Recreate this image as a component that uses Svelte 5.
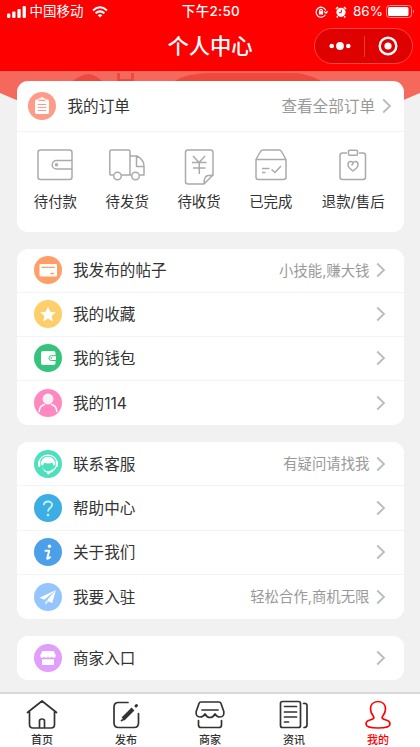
<script>
  const orders = [
    { icon: 'wallet', label: '待付款' },
    { icon: 'truck', label: '待发货' },
    { icon: 'receipt', label: '待收货' },
    { icon: 'box', label: '已完成' },
    { icon: 'refund', label: '退款/售后' },
  ];

  const groups = [
    [
      { icon: 'card', color: '#ff9f68', label: '我发布的帖子', note: '小技能,赚大钱' },
      { icon: 'star', color: '#fccf6b', label: '我的收藏' },
      { icon: 'purse', color: '#34c57c', label: '我的钱包' },
      { icon: 'user', color: '#ff88c0', label: '我的114' },
    ],
    [
      { icon: 'service', color: '#4ce0bd', label: '联系客服', note: '有疑问请找我' },
      { icon: 'help', color: '#3daee5', label: '帮助中心' },
      { icon: 'info', color: '#4c9fe9', label: '关于我们' },
      { icon: 'plane', color: '#94c5ff', label: '我要入驻', note: '轻松合作,商机无限' },
    ],
    [{ icon: 'shop', color: '#df9ffb', label: '商家入口' }],
  ];

  const tabs = [
    { icon: 'home', label: '首页' },
    { icon: 'edit', label: '发布' },
    { icon: 'store', label: '商家' },
    { icon: 'news', label: '资讯' },
    { icon: 'me', label: '我的' },
  ];

  let active = $state('me');
</script>

{#snippet chevron()}
  <svg class="chevron" width="10" height="16" viewBox="0 0 10 16">
    <path d="M1.2 1.5 8 8l-6.8 6.5" />
  </svg>
{/snippet}

<div class="page">
  <header>
    <div class="status">
      <div class="carrier">
        <svg width="20" height="12" viewBox="0 0 20 12" fill="#fff">
          <rect x="0" y="7.5" width="3.3" height="4.5" rx="1" />
          <rect x="5.2" y="5.5" width="3.3" height="6.5" rx="1" />
          <rect x="10.4" y="3" width="3.3" height="9" rx="1" />
          <rect x="15.6" y="0" width="3.3" height="12" rx="1" />
        </svg>
        <span>中国移动</span>
        <svg class="wifi" width="16" height="12" viewBox="0 0 16 12" fill="none" stroke="#fff" stroke-width="2">
          <path d="M1 4.4Q8-1.8 15 4.4M3.6 7.2q4.4-3.7 8.8 0" />
          <path d="M8 11.5 5.700 9.200q2.300-1.700 4.600 0z" fill="#fff" stroke="none" />
        </svg>
      </div>
      <div class="time">下午2:50</div>
      <div class="power">
        <svg width="13" height="12" viewBox="0 0 13 12" fill="none" stroke="#fff" stroke-width="1.2">
          <path d="M10.400 8.800A5 5 0 1 1 10.800 4.500M9 5.400l2 1.800 1.600-2" />
          <rect x="3.900" y="5.200" width="4.200" height="3.300" fill="#fff" stroke="none" />
          <path d="M4.700 5.500V4.300q1.300-1.800 2.600 0v1.200" />
        </svg>
        <svg class="alarm" width="12" height="12" viewBox="0 0 12 12">
          <circle cx="6" cy="6.300" r="4.600" fill="#fff" />
          <path d="M1 3 3 1M11 3 9 1M2.800 10.200l-1 1.300M9.200 10.200l1 1.300" stroke="#fff" stroke-width="1.5" />
          <path d="M6.300 3.700v3H4" fill="none" stroke="#f00" stroke-width="1" />
        </svg>
        <span>86%</span>
        <svg class="battery" width="29" height="13" viewBox="0 0 29 13">
          <rect x=".5" y=".5" width="25" height="12" rx="3" fill="none" stroke="#ff8f8f" />
          <rect x="2" y="2" width="20.500" height="9" rx="1.500" fill="#fff" />
          <path d="M27 4.500q2 2 0 4z" fill="#ff8f8f" />
        </svg>
      </div>
    </div>
    <div class="nav">
      <h1>个人中心</h1>
      <div class="capsule">
        <svg width="22" height="10" viewBox="0 0 22 10" fill="#fff">
          <circle cx="2.700" cy="5" r="2.300" />
          <circle cx="11" cy="5" r="3.900" />
          <circle cx="19.300" cy="5" r="2.300" />
        </svg>
        <i></i>
        <svg width="20" height="20" viewBox="0 0 20 20">
          <circle cx="10" cy="10" r="8.300" fill="none" stroke="#fff" stroke-width="2.400" />
          <circle cx="10" cy="10" r="3.600" fill="#fff" />
        </svg>
      </div>
    </div>
  </header>

  <main>
    <svg class="backdrop" width="420" height="60" viewBox="0 0 420 60">
      <path d="M0 0h420v22Q210 118 0 22z" fill="#f4695c" />
      <path d="M73 10q7-6 15-7 8 1 14 7zM117 2h3v6h11V2h3v8h-17zM175 10q10-7 32-8h90q14 2 24 8z" fill="#ef493e" />
    </svg>

    <section class="card orders">
      <div class="orders-head">
        <svg width="28" height="28" viewBox="0 0 28 28">
          <circle cx="14" cy="14" r="14" fill="#ff9b88" />
          <path d="M8.500 7.500h2.200V6.200h1.600q1.700-2.400 3.400 0h1.600v1.300h2.200q1.500 0 1.500 1.500v11.500q0 1.500-1.500 1.500h-11Q7 22 7 20.500V9q0-1.500 1.500-1.500z" fill="#fff" />
          <path d="M10.700 8.400h6.600M9.700 12.500h8.600M9.700 15.500h8.600M9.700 18.500h8.600" stroke="#ff9b88" stroke-width="1.2" />
        </svg>
        <span class="label">我的订单</span>
        <span class="more">查看全部订单</span>
        {@render chevron()}
      </div>
      <div class="order-list">
        {#each orders as item}
          <div class="order">
            <svg width="40" height="40" viewBox="0 0 40 40">
              {#if item.icon === 'wallet'}
                <rect x="3" y="5" width="34" height="29.500" rx="2.500" />
                <path d="M37 15.500H21.500a4.300 4.300 0 0 0 0 8.600H37" />
                <circle cx="21.500" cy="19.800" r="1" />
              {:else if item.icon === 'truck'}
                <path d="M6 30H4.300Q2.800 30 2.800 28.500V6.500Q2.800 5 4.300 5h17Q23 5 23 6.500V30h-8.300M23 11h7q7 3.500 7 10.500V30h-4.300M24.500 30H23M29.500 11.500v10h7" />
                <circle cx="10.500" cy="31" r="3.800" />
                <circle cx="28.500" cy="31" r="3.800" />
              {:else if item.icon === 'receipt'}
                <path d="M34 30V7.500Q34 5 31.500 5H9Q6.500 5 6.500 7.500v29Q6.500 39 9 39h16zM25 39q0-9 5-8.500Q34 31 34 28" />
                <path d="m14 11 6 6.500 6-6.500M13 17.500h14.500M14 23h12.500M20.300 17.500V29" />
              {:else if item.icon === 'box'}
                <path d="m5 14.500 4.500-8Q10.500 5 12 5h16q1.500 0 2.500 1.500l4.500 8V32q0 2.500-2.500 2.500h-25Q5 34.500 5 32zM5 14.500h30" />
                <path d="M11 23.500h7.500M11 27.500h3.500M20.500 24.500l3.500 3 6-6.500" />
              {:else}
                <path d="M14 8h-4.500Q7 8 7 10.500V32q0 2.500 2.500 2.500h20.500q2.500 0 2.500-2.500V10.500Q32.500 8 30 8h-4" />
                <rect x="15.500" y="5.300" width="9" height="5" rx="1" />
                <path d="M20 26q-5-3.500-5-6.300c0-4 4-4 5-1.400 1-2.600 5-2.600 5 1.400Q25 22.500 20 26zM20 18.500l-1.500 2" />
              {/if}
            </svg>
            <span>{item.label}</span>
          </div>
        {/each}
      </div>
    </section>

    {#each groups as rows}
      <section class="card">
        {#each rows as row}
          <div class="row">
            <svg width="28" height="28" viewBox="0 0 28 28">
              <circle cx="14" cy="14" r="14" fill={row.color} />
              {#if row.icon === 'card'}
                <rect x="5.500" y="8" width="17.500" height="12.500" rx="1" fill="#fff" />
                <path d="M7.500 11.300h13.500M16.500 17.500h3.500" stroke={row.color} stroke-width="1.3" />
              {:else if row.icon === 'star'}
                <path d="m14 6.500 2.200 5.200 5.600.5-4.200 3.700 1.200 5.600-4.800-3-4.800 3 1.200-5.600-4.200-3.700 5.600-.5z" fill="#fff" />
              {:else if row.icon === 'purse'}
                <rect x="7" y="7" width="14.500" height="14" rx="2" fill="#fff" />
                <path d="M22 11.700h-4.700a2.400 2.400 0 0 0 0 4.800H22" fill="#fff" stroke={row.color} />
                <circle cx="17.300" cy="14.100" r=".8" fill={row.color} />
              {:else if row.icon === 'user'}
                <circle cx="14" cy="10" r="5.400" fill="#f6f3f5" />
                <path d="M5.200 22.500Q5.500 16.500 10.500 15.500M22.800 22.500Q22.500 16.500 17.500 15.500" fill="none" stroke="#fff" stroke-width="1.5" stroke-linecap="round" />
              {:else if row.icon === 'service'}
                <path d="M5.300 13C5 2.500 23 2.500 22.700 13q.2 7-8 10" fill="none" stroke="#fff" stroke-width="1.2" />
                <path d="M7 14.500C6 4 22 4 21 14.500l-1.800 1.300-.7-3.300c-2.500 1.300-5.500 1.500-8.300.3l-1.400 3z" fill="#fff" />
                <path d="M8 15.500q1 5 6 6 5-1 6-6-.8 6.500-6 7.200-5.200-.7-6-7.200z" fill="#fff" />
                <path d="M5.200 11.500v4.500M22.800 11.500v4.500" stroke="#fff" stroke-width="2.2" stroke-linecap="round" />
                <circle cx="14.300" cy="23" r="1.400" fill="#fff" />
              {:else if row.icon === 'help'}
                <path d="M9.800 11.200c.2-5 8.500-4.800 8.300-.3-.1 3-4.100 3.200-4.100 6.500" fill="none" stroke="#c1f5ed" stroke-width="1.8" />
                <circle cx="14" cy="21" r="1.300" fill="#c1f5ed" />
              {:else if row.icon === 'info'}
                <circle cx="15.500" cy="8.300" r="1.700" fill="#fff" />
                <path d="M11.500 12.700h3.700l-2 7.800q1.300.6 2.900-1.300" fill="none" stroke="#fff" stroke-width="2" stroke-linecap="round" stroke-linejoin="round" />
              {:else if row.icon === 'plane'}
                <path d="M22 7 5.500 14.700l4.800 2zM22 7l-9.500 10.700 5.700 2.200zM11.500 18v3.500l2.500-2.600z" fill="#fff" />
              {:else}
                <path d="M8.200 7h11.600l2 4.500q.2 2.300-2 2.300-1.300 0-2.100-1-.8 1-2 1t-1.700-1q-.8 1-2 1t-1.700-1q-.8 1-2.100 1-2.200 0-2-2.300zM8 15.300h12V20q0 1-1 1H9q-1 0-1-1z" fill="#fff" />
              {/if}
            </svg>
            <span class="label">{row.label}</span>
            {#if row.note}<span class="note">{row.note}</span>{/if}
            {@render chevron()}
          </div>
        {/each}
      </section>
    {/each}
  </main>

  <footer>
    {#each tabs as tab}
      <button class:active={active === tab.icon} onclick={() => (active = tab.icon)}>
        <svg width="32" height="32" viewBox="0 0 32 32">
          {#if tab.icon === 'home'}
            <path d="M1.500 14.500 16 3l14.500 11.500M3.500 13v13.500Q3.500 30 7 30h18q3.500 0 3.500-3.500V13M13.500 29.500V23q0-2 2.500-2t2.500 2v6.500" />
          {:else if tab.icon === 'edit'}
            <path d="M18 4.500H8.500Q4 4.500 4 9v16q0 4.500 4.500 4.500H24q4.500 0 4.500-4.500v-9.500" />
            <path d="M13 21 23 11" stroke-width="4" stroke-linecap="butt" />
            <path d="m11.500 22.500 2-1" />
            <path d="m26 8 .5-.5" stroke-width="3" />
          {:else if tab.icon === 'store'}
            <path d="M7 4h18q1.500 0 2 1.500l2.800 8q.7 5.500-4 5.500-3 0-4.800-3-2 3.500-5 3.500t-5-3.500q-1.800 3-4.800 3-4.700 0-4-5.500L5 5.500Q5.500 4 7 4zM8 12h16M4.500 22.500V27q0 2.500 2.500 2.500h18q2.500 0 2.500-2.500v-4.500" />
          {:else if tab.icon === 'news'}
            <rect x="2.500" y="3.500" width="20" height="26" rx="2" />
            <path d="M6.500 8.500h12M6.500 14h12M6.500 19h12M6.500 24h4M25.500 5.500q3.500-.5 3.500 2v19.500q0 2.500-3 2.500" />
          {:else}
            <path d="M16 3.500c-5 0-7.500 3.500-7.500 7.500 0 3.800 1.700 5.800 3 7.500 1.300 2-.3 2.700-3.500 3.500-3 .8-4 2.200-4 4 0 3 5.500 4 12 4s12-1 12-4c0-1.800-1-3.200-4-4-3.200-.8-4.800-1.500-3.500-3.500 1.300-1.700 3-3.700 3-7.500 0-4-2.500-7.500-7.500-7.500z" />
          {/if}
        </svg>
        <span>{tab.label}</span>
      </button>
    {/each}
  </footer>
</div>

<style>
  :global(body) {
    margin: 0;
  }

  .page {
    display: flex;
    flex-direction: column;
    width: 420px;
    height: 747px;
    overflow: hidden;
    background: #f1f1f1;
    color: #333;
    font-family: Inter, 'Noto Sans CJK SC', sans-serif;
  }

  svg {
    display: block;
    flex-shrink: 0;
  }

  header {
    height: 71px;
    background: #f00;
    color: #fff;
    flex-shrink: 0;
  }

  .status {
    display: grid;
    grid-template-columns: 1fr auto 1fr;
    align-items: center;
    height: 23px;
    padding: 0 5px 0 7px;
    font-size: 13.5px;
    line-height: 23px;
  }

  .carrier,
  .power {
    display: flex;
    align-items: center;
  }

  .carrier span {
    margin-left: 2.5px;
  }

  .wifi {
    margin-left: 8px;
  }

  .time {
    font-weight: 500;
    letter-spacing: 0.3px;
  }

  .power {
    justify-content: flex-end;
  }

  .alarm {
    margin: 0 6.5px;
  }

  .battery {
    margin-left: 3px;
  }

  .nav {
    display: grid;
    grid-template-columns: 1fr auto 1fr;
    align-items: center;
    height: 44px;
    padding: 0 7px;
  }

  h1 {
    grid-column: 2;
    margin: 0;
    font-size: 21.3px;
    font-weight: 500;
    line-height: 46px;
  }

  .capsule {
    display: flex;
    align-items: center;
    justify-content: space-between;
    justify-self: end;
    box-sizing: border-box;
    width: 99px;
    height: 36px;
    padding: 0 14px;
    border: 1px solid #f44;
    border-radius: 18px;
    background: #df0000;
  }

  .capsule i {
    width: 1px;
    height: 21px;
    margin-left: -1px;
    background: #f03838;
  }

  main {
    position: relative;
    flex: 1;
    min-height: 0;
    padding: 9.5px 16.5px 0;
  }

  .backdrop {
    position: absolute;
    top: 0;
    left: 0;
  }

  .card {
    position: relative;
    margin-bottom: 17px;
    border-radius: 11px;
    background: #fff;
    overflow: hidden;
  }

  .orders {
    height: 151.5px;
    margin-bottom: 16.5px;
  }

  .orders-head {
    display: flex;
    align-items: center;
    height: 50px;
    padding: 0 12px 0 11.5px;
    border-bottom: 1px solid #f4f4f4;
  }

  .label {
    flex: 1;
    margin-left: 11.5px;
    padding-top: 2px;
    font-size: 15.6px;
    line-height: 24px;
  }

  .more {
    padding-top: 2px;
    color: #999;
    font-size: 15.6px;
    line-height: 24px;
  }

  .chevron {
    margin-left: 6.5px;
    fill: none;
    stroke: #bbb;
    stroke-width: 1.8;
  }

  .order-list {
    display: grid;
    grid-template-columns: repeat(4, 71.8px) 93px;
    padding: 13px 0 0 3px;
  }

  .order {
    display: flex;
    flex-direction: column;
    align-items: center;
    gap: 6px;
    font-size: 14.4px;
    line-height: 22px;
    white-space: nowrap;
  }

  .order svg {
    fill: none;
    stroke: #aaa;
    stroke-width: 1.5;
    stroke-linejoin: round;
  }

  .row {
    display: flex;
    align-items: center;
    box-sizing: border-box;
    height: 44.2px;
    padding: 0 17.5px 0 17px;
    border-bottom: 1px solid #f4f4f4;
  }

  .row:last-child {
    border-bottom: 0;
  }

  .note {
    padding-top: 1px;
    color: #999;
    font-size: 14.4px;
    line-height: 22px;
  }

  footer {
    display: grid;
    grid-template-columns: repeat(5, 1fr);
    flex-shrink: 0;
    box-sizing: border-box;
    height: 55px;
    border-top: 2px solid #d8d8d8;
    background: #fff;
    z-index: 1;
  }

  button {
    display: flex;
    flex-direction: column;
    align-items: center;
    padding: 4px 0 0;
    border: 0;
    background: none;
    color: #333;
    font-family: inherit;
    font-size: 11px;
    font-weight: 500;
    line-height: 20px;
    cursor: pointer;
  }

  button svg {
    position: relative;
    fill: none;
    stroke: currentColor;
    stroke-width: 1.7;
    stroke-linecap: round;
    stroke-linejoin: round;
  }

  button.active {
    color: #f00;
  }
</style>
